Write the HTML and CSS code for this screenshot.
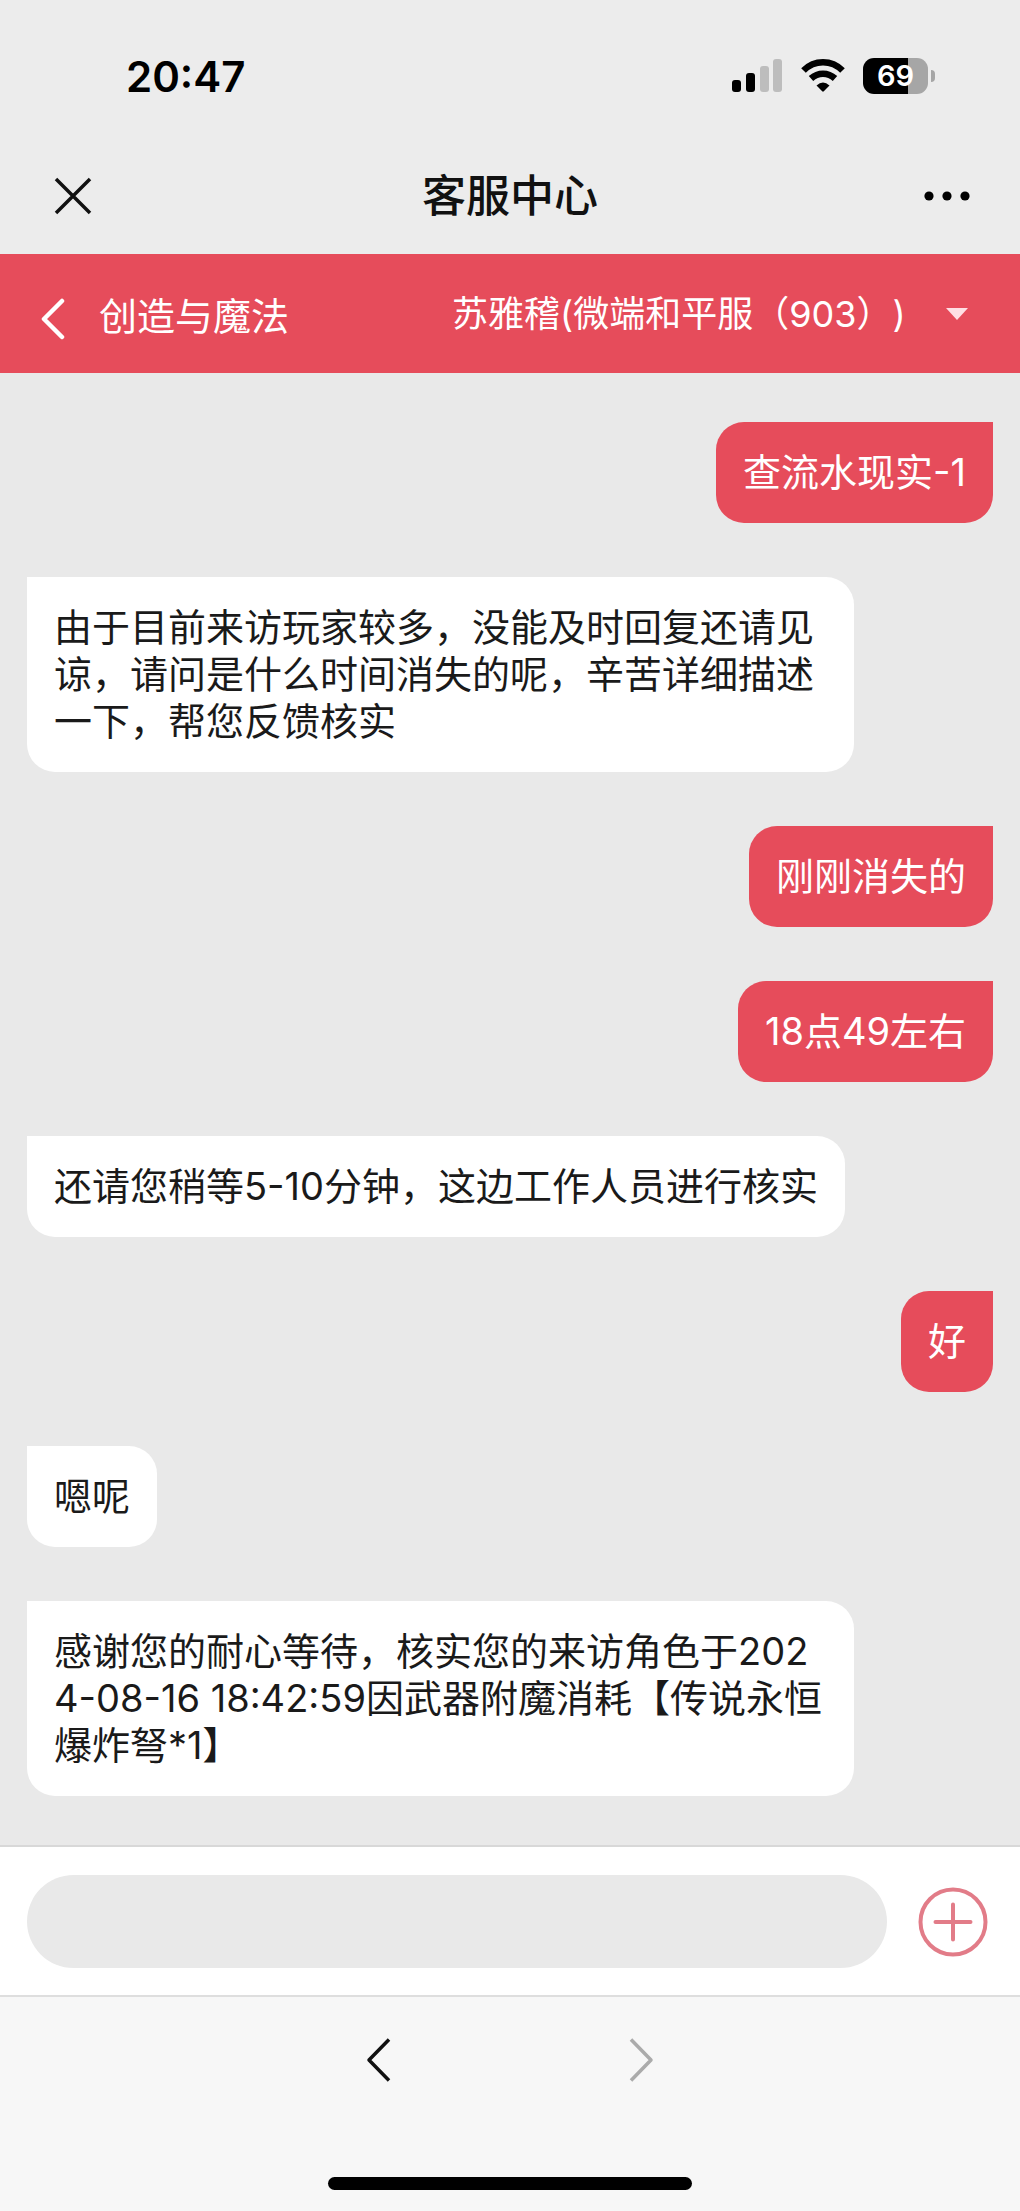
FILE: index.html
```html
<!DOCTYPE html>
<html lang="zh-CN">
<head>
    <meta charset="UTF-8">
    <meta name="viewport" content="width=device-width, initial-scale=1.0">
    <title>客服中心</title>
    <link rel="stylesheet" href="styles.css">
</head>
<body>
    <div class="status-bar">
        <span class="time">20:47</span>
        <div class="status-icons">
            <svg class="signal" width="52" height="36" viewBox="0 0 52 36" aria-hidden="true">
                <rect x="1" y="22" width="9" height="12" rx="3"/>
                <rect x="15" y="15" width="9" height="19" rx="3"/>
                <rect x="29" y="8" width="9" height="26" rx="3" fill="#bdbdbd"/>
                <rect x="42" y="1" width="9" height="33" rx="3" fill="#bdbdbd"/>
            </svg>
            <svg class="wifi" width="44" height="36" viewBox="0 0 44 36" aria-hidden="true">
                <path d="M2.500 12.500C13.500 1.500 30.500 1.500 41.500 12.500" fill="none" stroke="#000" stroke-width="6.500"/>
                <path d="M10 20.500C17 14 27 14 34 20.500" fill="none" stroke="#000" stroke-width="6.500"/>
                <path d="M15.500 27.500Q22 21.500 28.500 27.500L22.800 33.300Q22 34 21.200 33.300Z"/>
            </svg>
            <div class="battery">
                <span class="battery-level">69</span>
                <span class="battery-cap"></span>
            </div>
        </div>
    </div>

    <header class="nav-bar">
        <button class="icon-button" type="button" aria-label="关闭">
            <svg width="48" height="48" viewBox="0 0 48 48"><path d="M7 7L41 41M41 7L7 41" fill="none" stroke="#111" stroke-width="3.500"/></svg>
        </button>
        <h1>客服中心</h1>
        <button class="icon-button more" type="button" aria-label="更多">
            <svg width="48" height="12" viewBox="0 0 48 12"><circle cx="6" cy="6" r="4.600"/><circle cx="24" cy="6" r="4.600"/><circle cx="42" cy="6" r="4.600"/></svg>
        </button>
    </header>

    <div class="game-bar">
        <a href="#" class="game-link">
            <svg width="24" height="42" viewBox="0 0 24 42" aria-hidden="true"><path d="M21 3L3 21L21 39" fill="none" stroke="#fff" stroke-width="4.500" stroke-linecap="round" stroke-linejoin="round"/></svg>
            <span>创造与魔法</span>
        </a>
        <label class="account">
            <select aria-label="角色">
                <option>苏雅稽(微端和平服（903）)</option>
            </select>
            <svg width="22" height="12" viewBox="0 0 22 12" aria-hidden="true"><path d="M0 0H22L11 12Z" fill="#ffdfe4"/></svg>
        </label>
    </div>

    <main class="chat">
        <p class="message mine">查流水现实-1</p>
        <p class="message">由于目前来访玩家较多，没能及时回复还请见谅，请问是什么时间消失的呢，辛苦详细描述一下，帮您反馈核实</p>
        <p class="message mine">刚刚消失的</p>
        <p class="message mine">18点49左右</p>
        <p class="message">还请您稍等5-10分钟，这边工作人员进行核实</p>
        <p class="message mine">好</p>
        <p class="message">嗯呢</p>
        <p class="message">感谢您的耐心等待，核实您的来访角色于2024-08-16 18:42:59因武器附魔消耗【传说永恒爆炸弩*1】</p>
    </main>

    <form class="composer">
        <input type="text" aria-label="输入消息">
        <button class="icon-button" type="button" aria-label="添加">
            <svg width="70" height="70" viewBox="0 0 70 70"><circle cx="35" cy="35" r="32.500" fill="none" stroke="#e27c88" stroke-width="4"/><path d="M35 17.500V52.500M17.500 35H52.500" fill="none" stroke="#e27c88" stroke-width="4" stroke-linecap="round"/></svg>
        </button>
    </form>

    <footer class="toolbar">
        <div class="history">
            <button class="icon-button" type="button" aria-label="后退">
                <svg width="26" height="44" viewBox="0 0 26 44"><path d="M23 1.500L3 22L23 42.500" fill="none" stroke="#111" stroke-width="3.500" stroke-linejoin="round"/></svg>
            </button>
            <button class="icon-button" type="button" aria-label="前进" disabled>
                <svg width="26" height="44" viewBox="0 0 26 44"><path d="M3 1.500L23 22L3 42.500" fill="none" stroke="#ababab" stroke-width="3.500" stroke-linejoin="round"/></svg>
            </button>
        </div>
        <div class="home-indicator"></div>
    </footer>
</body>
</html>
```
FILE: styles.css
```css
* {
    box-sizing: border-box;
}

body {
    font-family: Inter, "Noto Sans CJK SC", sans-serif;
    background-color: #ececec;
    color: #1a1a1a;
    display: flex;
    flex-direction: column;
    min-height: 100vh;
    margin: 0;
    text-spacing-trim: space-all;
}

svg {
    display: block;
    flex: none;
}

.icon-button {
    padding: 0;
    border: 0;
    background: none;
    cursor: pointer;
}

.status-bar {
    display: flex;
    justify-content: space-between;
    align-items: center;
    height: 138px;
    padding: 14px 85px 0 126px;
    color: #000;
}

.time {
    font-size: 42px;
    font-weight: 600;
}

.status-icons {
    display: flex;
    align-items: center;
    gap: 18px;
}

.battery {
    display: flex;
    align-items: center;
    gap: 3px;
}

.battery-level {
    width: 65px;
    border-radius: 11px;
    background: linear-gradient(to right, #000 69%, #a6a6a6 69%);
    color: #fff;
    font-size: 29px;
    font-weight: 600;
    line-height: 36px;
    text-align: center;
}

.battery-cap {
    width: 4px;
    height: 12px;
    border-radius: 0 4px 4px 0;
    background-color: #a6a6a6;
}

.nav-bar {
    display: grid;
    grid-template-columns: 1fr auto 1fr;
    align-items: center;
    height: 116px;
    padding: 0 49px;
}

.nav-bar .icon-button {
    justify-self: start;
}

.nav-bar .more {
    justify-self: end;
}

h1 {
    margin: 0;
    color: #111;
    font-size: 44px;
    font-weight: 500;
    line-height: 60px;
}

.game-bar {
    display: flex;
    justify-content: space-between;
    align-items: center;
    height: 119px;
    padding: 0 52px 0 41px;
    background-color: #e64c5b;
    color: #fff;
}

.game-link {
    display: flex;
    align-items: flex-end;
    gap: 34px;
    padding-top: 4px;
    color: #fff;
    font-size: 38px;
    line-height: 48px;
    text-decoration: none;
}

.account {
    display: flex;
    align-items: center;
    gap: 40px;
}

.account select {
    appearance: none;
    padding: 0;
    border: 0;
    background: none;
    color: #fff;
    font-family: inherit;
    font-size: 36px;
    line-height: 48px;
    cursor: pointer;
}

.chat {
    flex: 1;
    display: flex;
    flex-direction: column;
    align-items: flex-start;
    gap: 54px;
    padding: 49px 27px;
    background-color: #e9e9e9;
}

.message {
    max-width: calc(100% - 139px);
    margin: 0;
    padding: 27px;
    border-radius: 0 28px 28px 28px;
    background-color: #fff;
    font-size: 38px;
    line-height: 47px;
    word-break: break-all;
}

.message.mine {
    align-self: flex-end;
    border-radius: 28px 0 28px 28px;
    background-color: #e64c5b;
    color: #fff;
}

.composer {
    display: flex;
    align-items: center;
    gap: 31px;
    padding: 28px 32px 27px 27px;
    border-top: 2px solid #d8d8d8;
    background-color: #fff;
}

.composer input {
    flex: 1;
    min-width: 0;
    height: 93px;
    padding: 0 40px;
    border: 0;
    border-radius: 47px;
    background-color: #e9e9e9;
    font-family: inherit;
    font-size: 38px;
}

.toolbar {
    display: flex;
    flex-direction: column;
    justify-content: space-between;
    align-items: center;
    height: 216px;
    padding: 41px 0 21px;
    border-top: 2px solid #dedede;
    background-color: #f7f7f7;
}

.history {
    display: flex;
    gap: 236px;
}

.home-indicator {
    width: 364px;
    height: 13px;
    border-radius: 7px;
    background-color: #000;
}
```
